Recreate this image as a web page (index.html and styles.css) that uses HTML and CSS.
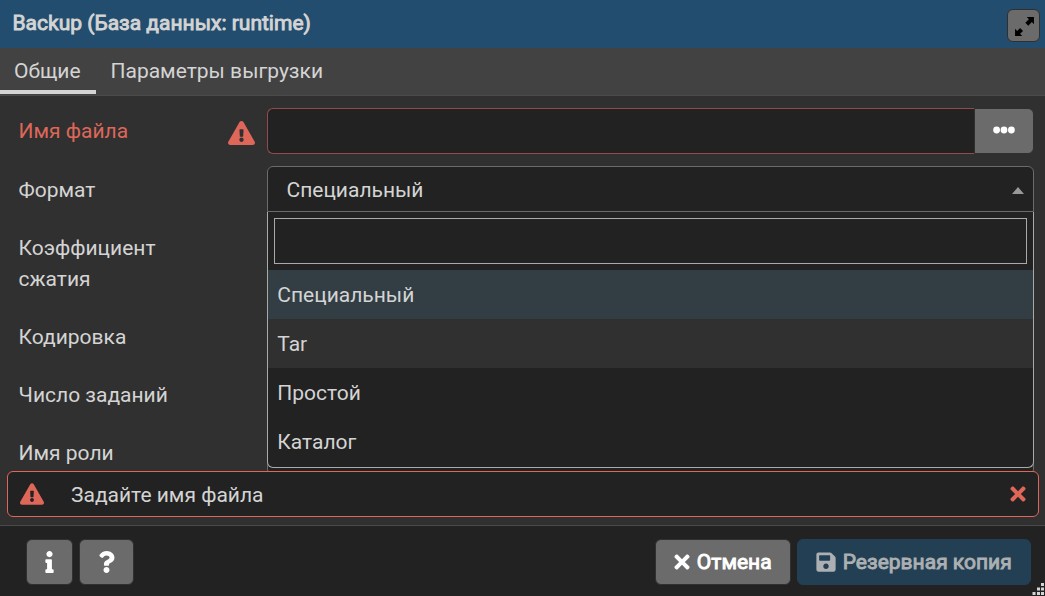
FILE: index.html
```
<!DOCTYPE html>
<html lang="ru">
<head>
<meta charset="utf-8">
<title>Backup</title>
<link rel="stylesheet" href="styles.css">
</head>
<body>
<svg class="defs" aria-hidden="true">
  <symbol id="warn" viewBox="0 0 576 512"><path d="M569.517 440.013C587.975 472.007 564.806 512 527.94 512H48.054c-36.937 0-59.999-40.055-41.577-71.987L246.423 23.985c18.467-32.009 64.72-31.951 83.154 0l239.94 416.028zM288 354c-25.405 0-46 20.595-46 46s20.595 46 46 46 46-20.595 46-46-20.595-46-46-46zm-43.673-165.346l7.418 136c.347 6.364 5.609 11.346 11.982 11.346h48.546c6.373 0 11.635-4.982 11.982-11.346l7.418-136c.375-6.874-5.098-12.654-11.982-12.654h-63.383c-6.884 0-12.356 5.78-11.981 12.654z"/></symbol>
  <symbol id="times" viewBox="0 0 352 512"><path d="M242.72 256l100.07-100.07c12.28-12.28 12.28-32.19 0-44.48l-22.24-22.24c-12.28-12.28-32.19-12.28-44.48 0L176 189.28 75.93 89.21c-12.28-12.28-32.19-12.28-44.48 0L9.21 111.45c-12.28 12.28-12.28 32.19 0 44.48L109.28 256 9.21 356.07c-12.28 12.28-12.28 32.19 0 44.48l22.24 22.24c12.28 12.28 32.2 12.28 44.48 0L176 322.72l100.07 100.07c12.28 12.28 32.2 12.28 44.48 0l22.24-22.24c12.28-12.28 12.28-32.19 0-44.48L242.72 256z"/></symbol>
</svg>
<div class="dialog">
  <header class="title-bar">
    <h1 class="title">Backup (База данных: runtime)</h1>
    <button class="maximize" aria-label="Развернуть">
      <svg class="icon-expand" viewBox="0 0 20 20"><path d="M12.200 1H19v6.800l-2-2-3.400 3.400-2.800-2.800 3.400-3.400zM7.800 19H1v-6.800l2 2 2.800-2.800 2.800 2.800-2.800 2.800z"/></svg>
    </button>
  </header>
  <nav class="tabs">
    <a class="tab tab-active">Общие</a>
    <a class="tab">Параметры выгрузки</a>
  </nav>
  <main class="form">
    <div class="row">
      <label class="label label-error">Имя файла <svg class="label-icon"><use href="#warn"/></svg></label>
      <div class="file-field"><div class="file-input"></div><button class="browse" aria-label="Обзор"><svg class="icon-dots" viewBox="0 0 22 8"><circle cx="3.600" cy="4" r="3.400"/><circle cx="11" cy="4" r="3.400"/><circle cx="18.400" cy="4" r="3.400"/></svg></button></div>
    </div>
    <div class="row">
      <label class="label">Формат</label>
      <div class="select">
        <span class="select-value">Специальный</span><i class="caret"></i>
        <div class="dropdown">
          <div class="search"></div>
          <ul class="options">
            <li class="option option-selected">Специальный</li>
            <li class="option option-hover">Tar</li>
            <li class="option">Простой</li>
            <li class="option">Каталог</li>
          </ul>
        </div>
      </div>
    </div>
    <div class="row row-tall"><label class="label">Коэффициент сжатия</label><div class="field"></div></div>
    <div class="row"><label class="label">Кодировка</label><div class="field"></div></div>
    <div class="row"><label class="label">Число заданий</label><div class="field"></div></div>
    <div class="row"><label class="label">Имя роли</label><div class="field"></div></div>
    <div class="alert">
      <svg class="alert-icon"><use href="#warn"/></svg>
      <span class="alert-text">Задайте имя файла</span>
      <svg class="alert-close"><use href="#times"/></svg>
    </div>
  </main>
  <footer class="footer">
    <button class="btn btn-info" aria-label="Информация"><svg class="icon-info" viewBox="0 0 192 512"><path d="M20 424.229h20V279.771H20c-11.046 0-20-8.954-20-20V212c0-11.046 8.954-20 20-20h112c11.046 0 20 8.954 20 20v212.229h20c11.046 0 20 8.954 20 20V492c0 11.046-8.954 20-20 20H20c-11.046 0-20-8.954-20-20v-47.771c0-11.046 8.954-20 20-20zM96 0C56.235 0 24 32.235 24 72s32.235 72 72 72 72-32.235 72-72S135.764 0 96 0z"/></svg></button>
    <button class="btn btn-help" aria-label="Справка"><svg class="icon-help" viewBox="0 0 384 512"><path d="M202.021 0C122.202 0 70.503 32.703 29.914 91.026c-7.363 10.58-5.093 25.086 5.178 32.874l43.138 32.709c10.373 7.865 25.132 6.026 33.253-4.148 25.049-31.381 43.63-49.449 82.757-49.449 30.764 0 68.816 19.799 68.816 49.631 0 22.552-18.617 34.134-48.993 51.164-35.423 19.86-82.299 44.576-82.299 106.405V320c0 13.255 10.745 24 24 24h72.471c13.255 0 24-10.745 24-24v-5.773c0-42.86 125.268-44.645 125.268-160.627C377.504 66.256 286.902 0 202.021 0zM192 373.459c-38.196 0-69.271 31.075-69.271 69.271 0 38.195 31.075 69.27 69.271 69.27s69.271-31.075 69.271-69.271-31.075-69.27-69.271-69.27z"/></svg></button>
    <button class="btn btn-cancel"><svg class="icon-times"><use href="#times"/></svg><span>Отмена</span></button>
    <button class="btn btn-primary"><svg class="icon-save" viewBox="0 0 448 512"><path d="M433.941 129.941l-83.882-83.882A48 48 0 0 0 316.118 32H48C21.49 32 0 53.49 0 80v352c0 26.51 21.49 48 48 48h352c26.51 0 48-21.49 48-48V163.882a48 48 0 0 0-14.059-33.941zM224 416c-35.346 0-64-28.654-64-64 0-35.346 28.654-64 64-64s64 28.654 64 64c0 35.346-28.654 64-64 64zm96-304.52V212c0 6.627-5.373 12-12 12H76c-6.627 0-12-5.373-12-12V108c0-6.627 5.373-12 12-12h228.52c3.183 0 6.235 1.264 8.485 3.515l3.48 3.48A11.996 11.996 0 0 1 320 111.48z"/></svg><span>Резервная копия</span></button>
    <svg class="grip" viewBox="0 0 13 13"><path d="M9 0h3v3H9zM5 4.500h3v3H5zM9 4.500h3v3H9zM.5 9h3v3H.5zM5 9h3v3H5zM9 9h3v3H9z"/></svg>
  </footer>
</div>
</body>
</html>
```
FILE: styles.css
```
* { box-sizing: border-box; }
body {
  margin: 0;
  background: #303030;
  color: #d4d4d4;
  font: 21px/31px Roboto, "Noto Sans", sans-serif;
}
.defs { position: absolute; width: 0; height: 0; }
svg { fill: currentColor; flex: none; display: block; }
button { font: inherit; color: inherit; border: 0; padding: 0; margin: 0; }
.dialog { width: 1045px; height: 596px; display: flex; flex-direction: column; overflow: hidden; }

.title-bar {
  height: 48px;
  flex: none;
  background: #234d6e;
  display: flex;
  align-items: flex-start;
  justify-content: space-between;
  padding: 8px 5px 0 12.5px;
}
.title { margin: 0; font-size: 21px; font-weight: 400; -webkit-text-stroke: 0.9px currentColor; }
.maximize {
  width: 33px;
  height: 33px;
  margin-top: 1px;
  background: #6b6b6b;
  border: 1px solid #303030;
  border-radius: 6px;
  color: #000;
  display: grid;
  place-items: center;
}
.icon-expand { width: 21px; height: 21px; margin: 2px 0 0 2px; }

.tabs { height: 48px; flex: none; background: #424242; border-bottom: 1px solid #4a4a4a; display: flex; }
.tab { height: 46px; padding: 8px 15px 0 14.5px; border-bottom: 4px solid transparent; }
.tab-active { width: 96px; padding: 8px 0 0 14px; border-color: #d4d4d4; }

.form { position: relative; height: 429px; flex: none; overflow: hidden; padding: 12px 11px 0 18.500px; }
.row { display: flex; height: 46px; margin-bottom: 12px; }
.row-tall { height: 77px; }
.label { width: 248.500px; flex: none; padding: 9px 70px 0 0; }
.label-error { display: flex; justify-content: space-between; padding: 8px 12px 0 0; color: #de6759; }
.label-icon { width: 27px; height: 24px; margin-top: 5px; }
.field, .select { flex: 1; height: 46px; background: #222; border: 1px solid #6b6b6b; border-radius: 6px; }
.file-field { flex: 1; display: flex; align-items: flex-start; }
.file-input { flex: 1; height: 46px; background: #222; border: 1px solid #914b4d; border-right: 0; border-radius: 6px 0 0 6px; }
.browse { width: 60px; height: 46px; background: #6b6b6b; border: 1px solid #303030; border-radius: 0 6px 6px 0; color: #fff; display: grid; place-items: center; }
.icon-dots { width: 22px; height: 8px; margin-top: -2px; }
.select {
  position: relative;
  display: flex;
  align-items: center;
  justify-content: space-between;
  padding: 0 9px 0 18.500px;
  border-radius: 6px 6px 0 0;
}
.select-value { padding-top: 2px; }
.caret { border: 6px solid transparent; border-top: 0; border-bottom: 7px solid #999; margin-top: 2px; }
.dropdown {
  position: absolute;
  z-index: 2;
  top: 45px;
  left: -1px;
  right: -1px;
  height: 256px;
  background: #222;
  border: 1px solid #aaa;
  border-top: 0;
  border-radius: 0 0 6px 6px;
  padding-top: 6px;
}
.search { height: 46px; margin: 0 6px 6px; border: 1px solid #aaa; }
.options { list-style: none; margin: 0; padding: 0; }
.option { height: 49px; line-height: 51px; padding-left: 9.300px; }
.option-selected { background: #323e44; }
.option-hover { background: #303030; }

.alert {
  position: absolute;
  z-index: 3;
  left: 7px;
  right: 6px;
  top: 375px;
  height: 46px;
  background: #222;
  border: 1px solid #de6759;
  border-radius: 6px;
  display: flex;
  align-items: center;
  padding: 0 12px;
}
.alert-icon { width: 24px; height: 22px; color: #de6759; margin-top: -1px; }
.alert-text { flex: 1; padding: 2px 0 0 27px; }
.alert-close { width: 16px; height: 22px; color: #de6759; }

.footer { position: relative; flex: 1; background: #222; border-top: 1px solid #4a4a4a; display: flex; padding: 13px 14px 0 26px; }
.btn {
  height: 46px;
  background: #6b6b6b;
  border: 1px solid #303030;
  border-radius: 6px;
  color: #fff;
  display: flex;
  align-items: center;
  justify-content: center;
  gap: 6.5px;
  -webkit-text-stroke: 0.9px currentColor;
}
.btn svg { stroke: none; }
.btn-info { width: 47px; margin-right: 6px; }
.btn-help { width: 55px; margin-right: auto; }
.btn-cancel { width: 136px; margin-right: 6px; }
.btn-primary { width: 234px; background: #233f54; border-color: #233f54; color: #acb0b2; }
.icon-info { width: 9px; height: 22px; }
.icon-help { width: 17px; height: 22px; }
.icon-times { width: 16px; height: 22px; }
.icon-save { width: 20px; height: 22px; margin-top: -1px; }
.grip { position: absolute; right: 0; bottom: 0; width: 13px; height: 13px; color: #d4d4d4; }
```
